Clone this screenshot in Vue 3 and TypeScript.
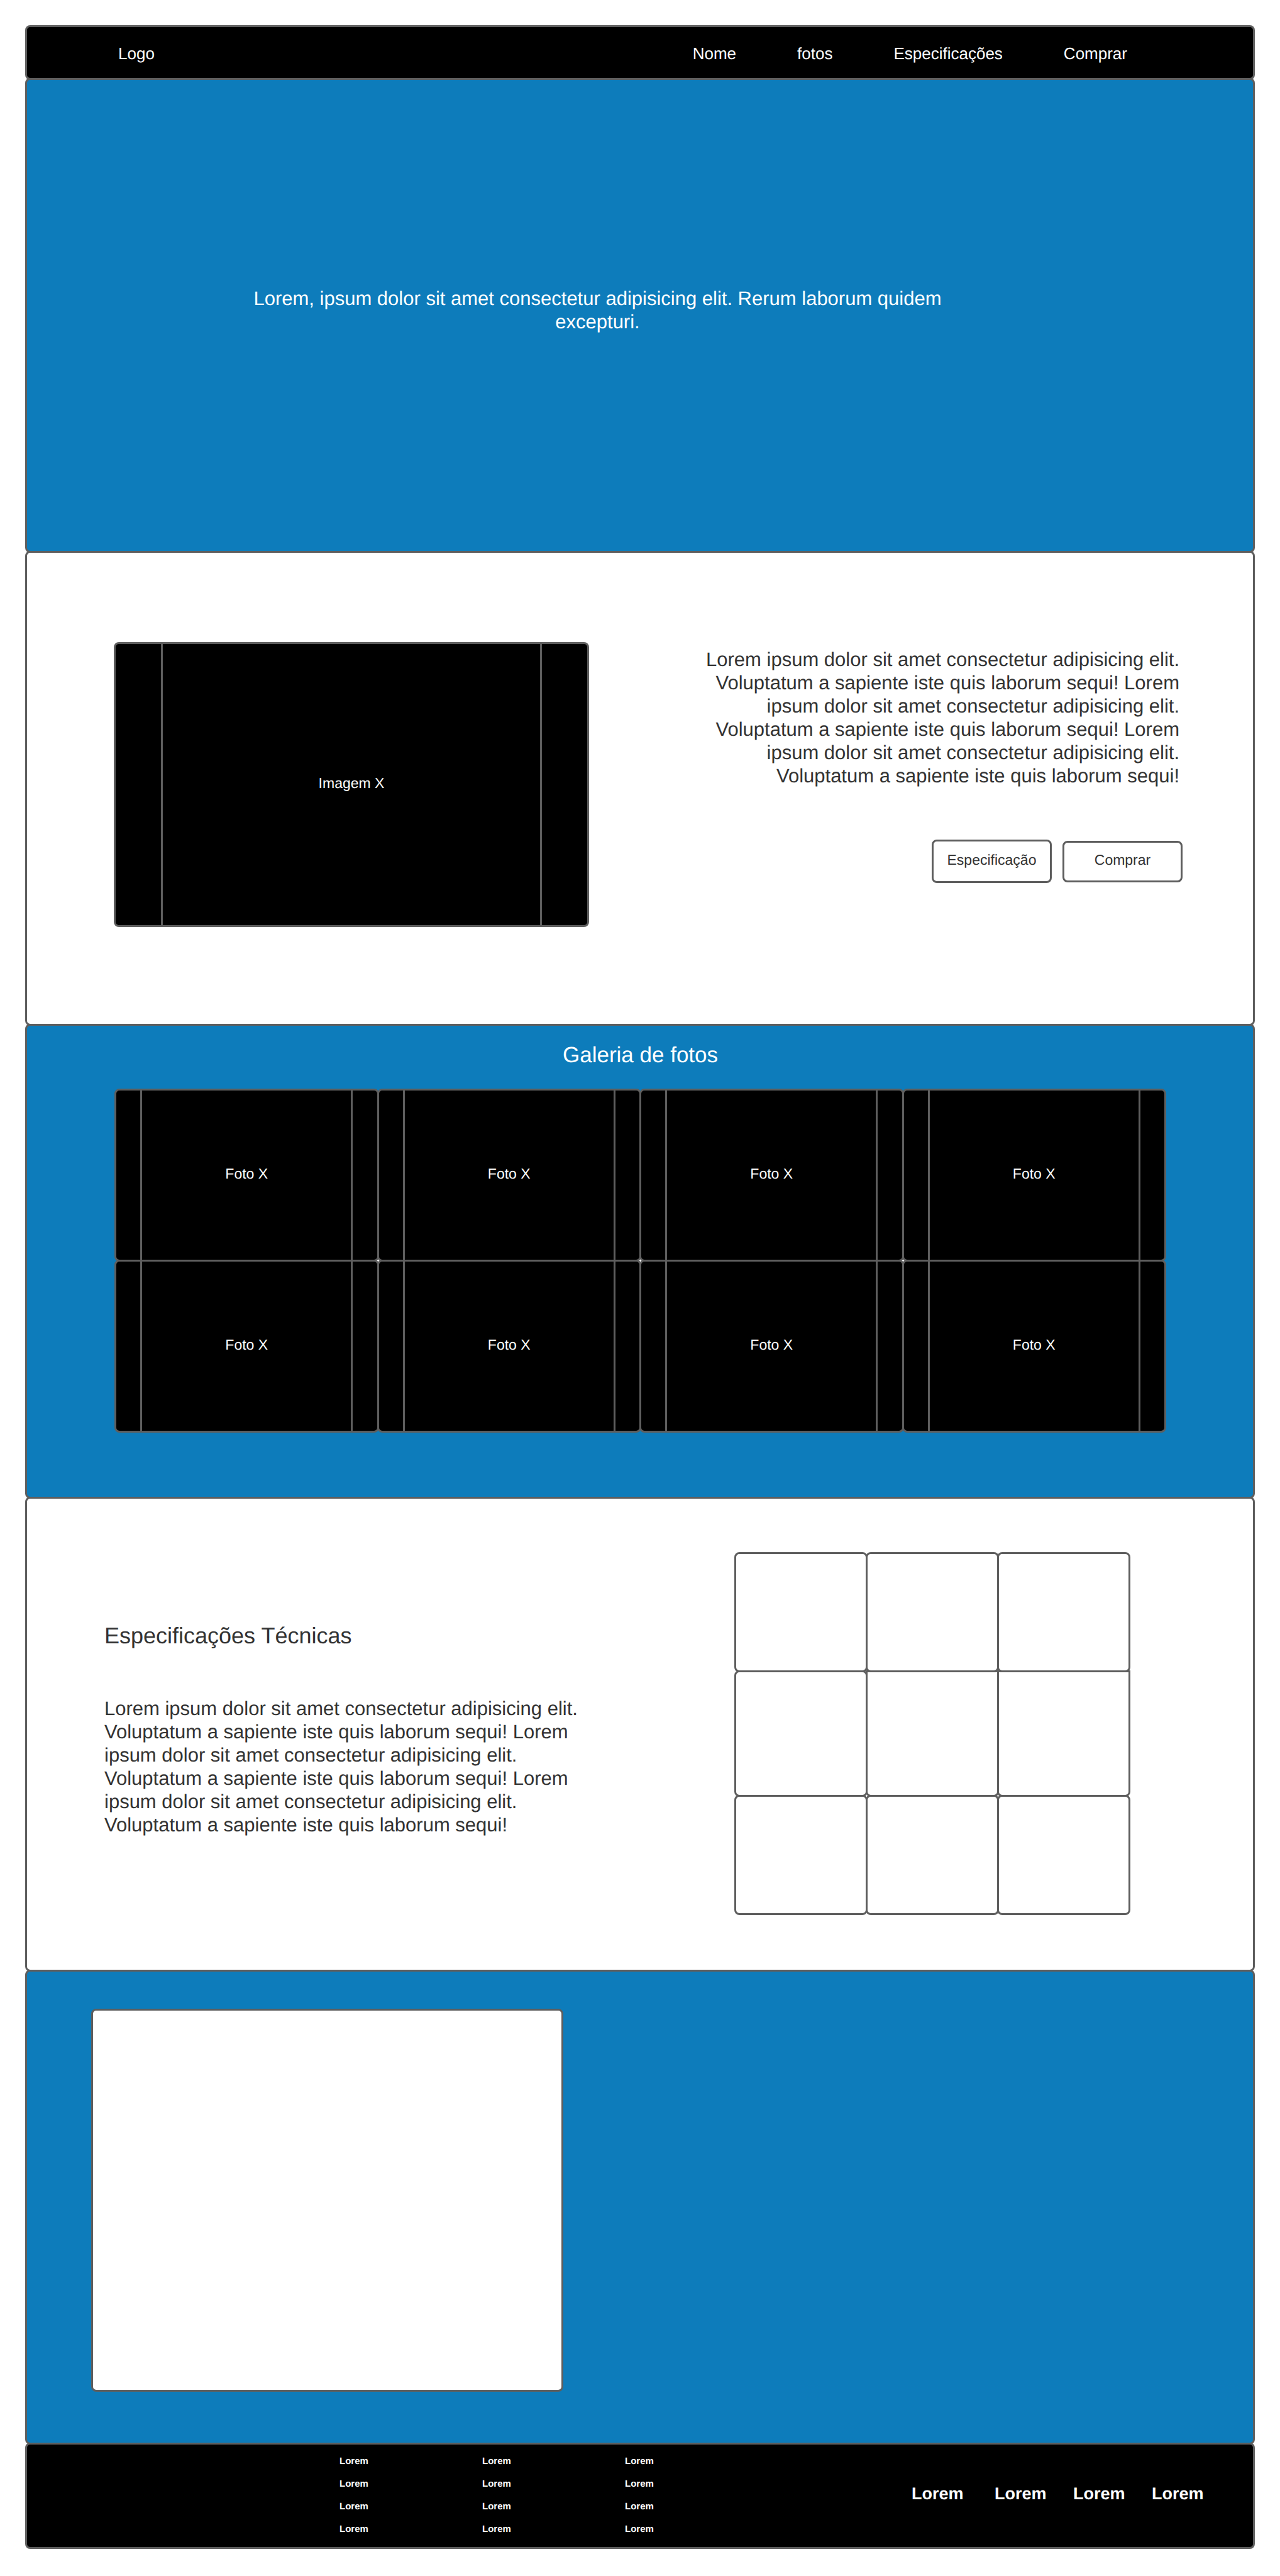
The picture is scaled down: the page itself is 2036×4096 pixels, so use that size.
<script setup lang="ts">
interface NavLink {
  label: string
  href: string
}

const navLinks: NavLink[] = [
  { label: 'Nome', href: '#nome' },
  { label: 'fotos', href: '#fotos' },
  { label: 'Especificações', href: '#especificacoes' },
  { label: 'Comprar', href: '#comprar' },
]

const description: string =
  'Lorem ipsum dolor sit amet consectetur adipisicing elit. Voluptatum a sapiente iste quis laborum sequi! ' +
  'Lorem ipsum dolor sit amet consectetur adipisicing elit. Voluptatum a sapiente iste quis laborum sequi! ' +
  'Lorem ipsum dolor sit amet consectetur adipisicing elit. Voluptatum a sapiente iste quis laborum sequi!'

const photos: string[] = Array.from({ length: 8 }, () => 'Foto X')
const footerColumns: string[][] = Array.from({ length: 3 }, () => Array.from({ length: 4 }, () => 'Lorem'))
const footerLinks: string[] = Array.from({ length: 4 }, () => 'Lorem')
</script>

<template>
  <div class="page">
    <header class="panel black header">
      <a class="logo" href="#nome">Logo</a>
      <nav class="nav">
        <a v-for="link in navLinks" :key="link.label" :href="link.href">{{ link.label }}</a>
      </nav>
    </header>

    <main class="main">
      <section id="nome" class="panel blue hero">
        <p class="copy hero-copy">
          Lorem, ipsum dolor sit amet consectetur adipisicing elit. Rerum laborum quidem excepturi.
        </p>
      </section>

      <section id="comprar" class="panel white product">
        <div class="frame product-image">
          <div class="frame-center">Imagem X</div>
        </div>
        <div class="product-info">
          <p class="copy product-copy">{{ description }}</p>
          <div class="actions">
            <button type="button" class="action tall">Especificação</button>
            <button type="button" class="action">Comprar</button>
          </div>
        </div>
      </section>

      <section id="fotos" class="panel blue gallery">
        <h2 class="gallery-title">Galeria de fotos</h2>
        <div class="gallery-grid">
          <div v-for="(photo, i) in photos" :key="i" class="frame photo">
            <div class="frame-center">{{ photo }}</div>
          </div>
        </div>
      </section>

      <section id="especificacoes" class="panel white specs">
        <div class="specs-text">
          <h2 class="specs-title">Especificações Técnicas</h2>
          <p class="copy">{{ description }}</p>
        </div>
        <div class="specs-grid">
          <div v-for="n in 9" :key="n" class="cell" :class="{ flush: n === 5 || n === 6 }"></div>
        </div>
      </section>

      <section class="panel blue contact">
        <div class="map"></div>
      </section>
    </main>

    <footer class="panel black footer">
      <div class="footer-columns">
        <ul v-for="(column, c) in footerColumns" :key="c" class="footer-column">
          <li v-for="(item, i) in column" :key="i"><a href="#nome">{{ item }}</a></li>
        </ul>
      </div>
      <nav class="footer-links">
        <a v-for="(item, i) in footerLinks" :key="i" href="#nome">{{ item }}</a>
      </nav>
    </footer>
  </div>
</template>

<style>
body {
  margin: 0;
  background: #fff;
}
</style>

<style scoped>
.page,
.page * {
  box-sizing: border-box;
}

.page {
  --line: #5e5e5e;
  padding: 40px 40px 43px;
  font-family: "Liberation Sans", Arial, sans-serif;
  text-rendering: geometricPrecision;
  color: #333;
}

h2,
p,
ul {
  margin: 0;
  padding: 0;
}

h2 {
  font-weight: 400;
}

ul {
  list-style: none;
}

a {
  color: inherit;
  text-decoration: none;
}

/* Panels share one border line with the panel above. */
.panel {
  border: 3px solid var(--line);
  border-radius: 8px;
}

.main > .panel {
  min-height: 755px;
  margin-top: -3px;
}

.black {
  background: #000;
  color: #fff;
}

.blue {
  background: #0d7cbb;
  color: #fff;
}

.white {
  background: #fff;
}

.copy {
  font-size: 31px;
  line-height: 37px;
}

.header {
  display: flex;
  align-items: center;
  justify-content: space-between;
  min-height: 87px;
  padding: 2px 200px 0 145px;
  font-size: 26px;
  line-height: 36px;
}

.nav {
  display: flex;
  gap: 97px;
}

.hero {
  display: flex;
  justify-content: center;
  align-items: flex-start;
  padding: 329px 135px 0 0;
}

.hero-copy {
  max-width: 1140px;
  text-align: center;
}

.frame {
  display: flex;
  background: #000;
  color: #fff;
  border: 3px solid var(--line);
  border-radius: 8px;
  font-size: 23px;
  line-height: 28px;
}

.frame-center {
  flex: 1;
  display: flex;
  align-items: center;
  justify-content: center;
  margin: 0 calc(10% - 3px);
  padding-bottom: 5px;
  border: solid var(--line);
  border-width: 0 3px;
}

.product {
  display: grid;
  grid-template-columns: 756fr 944fr;
  align-items: start;
  padding: 142px 112px 0 138px;
}

.product-image {
  height: 453px;
}

.product-info {
  display: flex;
  flex-direction: column;
  align-items: flex-end;
  padding-top: 9px;
}

.product-copy {
  max-width: 780px;
  padding-right: 5px;
  text-align: right;
}

.actions {
  display: flex;
  align-items: center;
  gap: 17px;
  margin-top: 83px;
}

.action {
  width: 191px;
  height: 66px;
  padding: 0 0 6px;
  border: 3px solid var(--line);
  border-radius: 8px;
  background: #fff;
  color: inherit;
  font-family: inherit;
  font-size: 23px;
  line-height: 28px;
  text-rendering: inherit;
}

.tall {
  height: 69px;
}

.gallery {
  padding: 26px 138px 0 139px;
}

.gallery-title {
  font-size: 35px;
  line-height: 42px;
  text-align: center;
}

.gallery-grid {
  display: grid;
  grid-template-columns: repeat(4, 1fr);
  grid-auto-rows: 272px;
  margin-top: 32px;
  padding: 0 3px 3px 0;
  background: linear-gradient(#fff, #fff) center / calc(100% - 40px) 20px no-repeat;
}

.photo,
.cell {
  margin: 0 -3px -3px 0;
}

.specs {
  display: flex;
  justify-content: space-between;
  align-items: flex-start;
  padding: 85px 195px 0 123px;
}

.specs-text {
  max-width: 780px;
  padding-top: 112px;
}

.specs-title {
  margin-bottom: 76px;
  font-size: 36px;
  line-height: 42px;
}

.specs-grid {
  display: grid;
  flex: 0 0 630px;
  grid-template-columns: repeat(3, 1fr);
  grid-template-rows: 188px 198px 188px;
  padding: 0 3px 3px 0;
}

.cell {
  border: 3px solid var(--line);
  border-radius: 8px;
}

.flush {
  border-top-left-radius: 0;
  border-top-right-radius: 0;
}

.contact {
  padding: 59px 102px 0;
}

.map {
  width: 43%;
  height: 609px;
  background: #fff;
  border: 3px solid var(--line);
  border-radius: 8px;
}

.footer {
  display: flex;
  justify-content: space-between;
  align-items: flex-start;
  min-height: 169px;
  margin-top: -3px;
  padding: 9px 36px 0 497px;
  font-weight: 700;
}

.footer-columns {
  display: grid;
  grid-template-columns: repeat(3, 227px);
  font-size: 15px;
  line-height: 36px;
}

.footer-links {
  display: grid;
  grid-template-columns: 132px repeat(3, 125px);
  padding-top: 51px;
  font-size: 27px;
  line-height: 36px;
}
</style>
